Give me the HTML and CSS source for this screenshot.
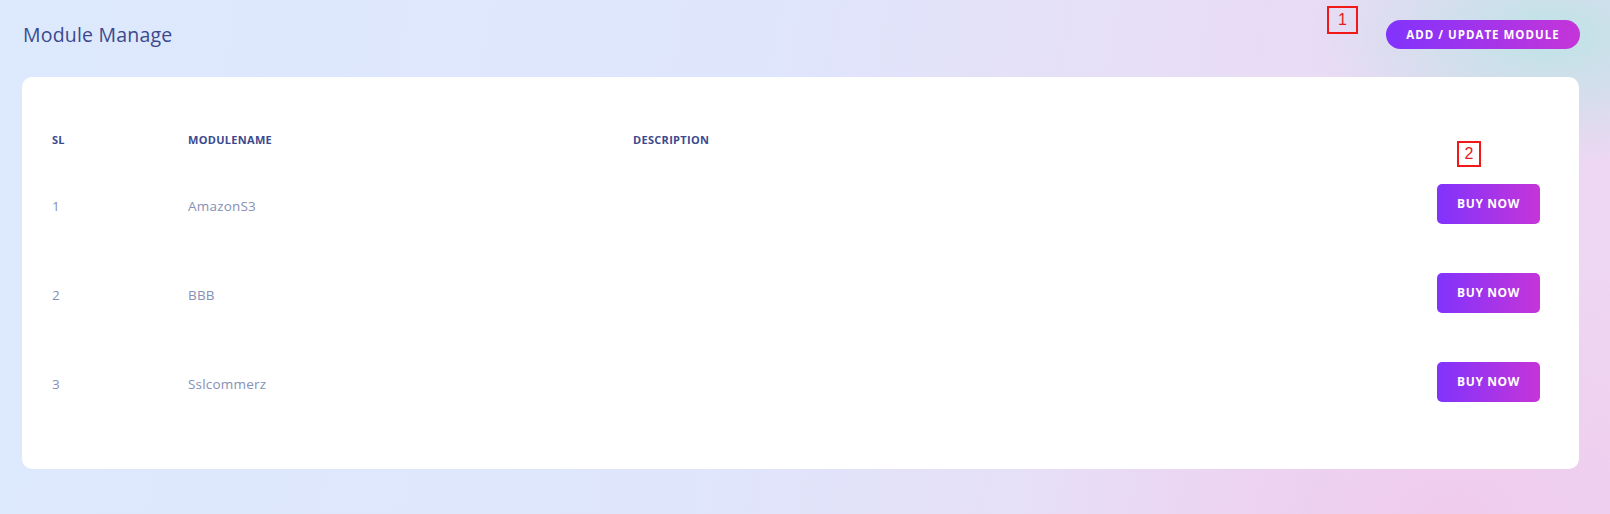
FILE: index.html
```html
<!DOCTYPE html>
<html>
<head>
<meta charset="utf-8">
<link rel="stylesheet" href="styles.css">
</head>
<body>
<div class="page">
  <div class="topbar">
    <h1 class="title">Module Manage</h1>
    <div class="top-actions">
      <span class="mark mark-1">1</span>
      <button class="btn-pill">ADD / UPDATE MODULE</button>
    </div>
  </div>
  <div class="card">
    <div class="table">
      <div class="th">SL</div>
      <div class="th">MODULENAME</div>
      <div class="th">DESCRIPTION</div>
      <div class="th th-action"><span class="mark mark-2">2</span></div>

      <div class="td td-text">1</div>
      <div class="td td-text">AmazonS3</div>
      <div class="td"></div>
      <div class="td td-action"><button class="btn-buy">BUY NOW</button></div>

      <div class="td td-text">2</div>
      <div class="td td-text">BBB</div>
      <div class="td"></div>
      <div class="td td-action"><button class="btn-buy">BUY NOW</button></div>

      <div class="td td-text">3</div>
      <div class="td td-text">Sslcommerz</div>
      <div class="td"></div>
      <div class="td td-action"><button class="btn-buy">BUY NOW</button></div>
    </div>
  </div>
</div>
</body>
</html>
```

FILE: styles.css
```css
html, body {
  margin: 0;
  height: 100%;
}
body {
  font-family: "Open Sans", "Liberation Sans", sans-serif;
  background:
    radial-gradient(ellipse 240px 130px at 1550px 35px, rgba(188, 228, 230, 0.95), rgba(188, 228, 230, 0) 100%),
    radial-gradient(ellipse 420px 260px at 1450px 514px, rgba(240, 200, 236, 0.8), rgba(240, 200, 236, 0) 100%),
    linear-gradient(100deg, #dde9fd 0%, #dfe6fc 45%, #e8ddf6 72%, #eed6f1 100%);
  min-height: 514px;
  overflow: hidden;
}
.page {
  padding: 20px 30px 0 22px;
}
.topbar {
  display: flex;
  align-items: center;
  justify-content: space-between;
  height: 29px;
}
.title {
  margin: -1px 0 0 1px;
  font-size: 19.5px;
  font-weight: 400;
  color: #3b4a8e;
  letter-spacing: 0.2px;
}
.top-actions {
  position: relative;
  display: flex;
  align-items: center;
}
.btn-pill {
  height: 29px;
  width: 194px;
  border: none;
  border-radius: 15px;
  background: linear-gradient(90deg, #8133fc 0%, #c535d8 100%);
  color: #fff;
  font-family: inherit;
  font-weight: 700;
  font-size: 11.5px;
  letter-spacing: 1px;
  padding: 0;
}
.mark {
  position: absolute;
  box-sizing: border-box;
  border: 2.5px solid #f01818;
  color: #e81a1a;
  font-family: "Liberation Sans", sans-serif;
  font-weight: 400;
  font-size: 16px;
  display: flex;
  align-items: center;
  justify-content: center;
  background: transparent;
}
.mark-1 {
  left: -59px;
  top: -14px;
  width: 31px;
  height: 28px;
}
.mark-2 {
  right: 59px;
  top: 22px;
  width: 24px;
  height: 26px;
}
.card {
  margin-top: 28px;
  margin-right: 1px;
  background: #fff;
  border-radius: 10px;
  padding: 42px 39px 43px 30px;
}
.table {
  display: grid;
  grid-template-columns: 136px 445px 1fr auto;
  grid-template-rows: 40px 89px 89px 89px;
}
.th, .td {
  display: flex;
  align-items: center;
}
.th {
  font-size: 11px;
  font-weight: 700;
  color: #3b4a8e;
  letter-spacing: 0.3px;
}
.th-action {
  position: relative;
  width: 103px;
}
.td {
  font-size: 13.5px;
  color: #8790b6;
  letter-spacing: 0.2px;
}
.td-text {
  padding-top: 4px;
}
.td-action {
  justify-content: flex-end;
}
.btn-buy {
  width: 103px;
  height: 40px;
  border: none;
  border-radius: 5px;
  background: linear-gradient(90deg, #8133fc 0%, #c535d8 100%);
  color: #fff;
  font-family: inherit;
  font-weight: 700;
  font-size: 12px;
  letter-spacing: 0.6px;
  padding: 0;
}
```
